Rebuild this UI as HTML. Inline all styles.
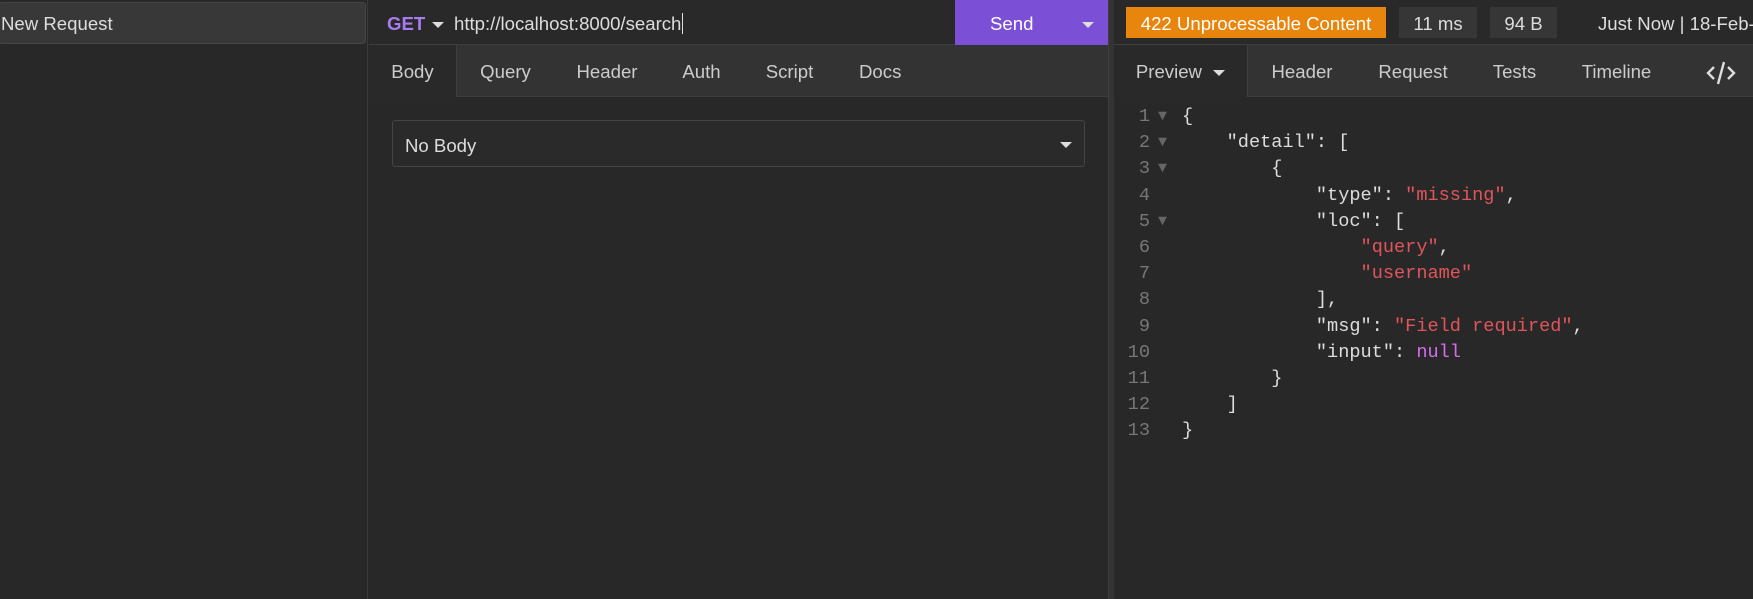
<!DOCTYPE html>
<html><head><meta charset="utf-8"><style>
*{margin:0;padding:0;box-sizing:border-box}
body{width:1753px;height:599px;background:#282828;overflow:hidden;position:relative;font-family:"Liberation Sans",sans-serif;color:#ddd;font-size:18.6px}
.a{position:absolute}
.tri{display:inline-block;width:0;height:0;border-left:6px solid transparent;border-right:6px solid transparent;border-top:6px solid #ddd;vertical-align:middle}
.tab{position:absolute;top:45px;height:52px;line-height:54px;text-align:center;color:#ccc;background:#333;border-bottom:1px solid #3e3e3e}
.code{position:absolute;font-family:"Liberation Mono",monospace;font-size:18.6px;white-space:pre;line-height:26.2px}
.s{color:#e0555b}.n{color:#d56ef0}
</style></head><body>
<div class="a" style="left:0;top:0;width:368px;height:599px;background:#282828;border-right:1px solid #3a3a3a"></div>
<div class="a" style="left:-2px;top:2px;width:368px;height:42px;background:#383838;border:1px solid #444;border-radius:3px"></div>
<div class="a" style="left:1px;top:13px;color:#ddd">New Request</div>
<div class="a" style="left:369px;top:0;width:739px;height:45px;background:#292929;border-bottom:1px solid #3e3e3e"></div>
<div class="a" style="left:387px;top:13px;color:#a77cf0;font-weight:bold">GET <span class="tri" style="margin-left:2px"></span></div>
<div class="a" style="left:454px;top:13px;color:#ddd">http://localhost:8000/search<span style="border-left:1px solid #ddd;margin-left:1px"></span></div>
<div class="a" style="left:955px;top:0;width:153px;height:45px;background:#7b4fd6"></div>
<div class="a" style="left:990px;top:13px;color:#fff">Send</div>
<div class="a" style="left:1082px;top:13px"><span class="tri"></span></div>
<div class="tab" style="left:369px;width:88px;background:#292929;border-bottom:none;border-right:1px solid #3e3e3e">Body</div>
<div class="tab" style="left:457px;width:97px">Query</div>
<div class="tab" style="left:554px;width:106px">Header</div>
<div class="tab" style="left:660px;width:83px">Auth</div>
<div class="tab" style="left:743px;width:93px">Script</div>
<div class="tab" style="left:836px;width:272px;text-align:left;padding-left:23px">Docs</div>
<div class="a" style="left:392px;top:120px;width:693px;height:47px;border:1px solid #444;border-radius:3px;background:#2a2a2a"></div>
<div class="a" style="left:405px;top:135px">No Body</div>
<div class="a" style="left:1060px;top:133px"><span class="tri"></span></div>
<div class="a" style="left:1108px;top:0;width:6px;height:599px;background:#333;border-left:1px solid #3e3e3e"></div>
<div class="a" style="left:1114px;top:0;width:639px;height:45px;background:#292929;border-bottom:1px solid #3e3e3e"></div>
<div class="a" style="left:1126px;top:7px;width:260px;height:31px;background:#e8850c;color:#fff;line-height:33px;text-align:center">422 Unprocessable Content</div>
<div class="a" style="left:1399px;top:7px;width:78px;height:31px;background:#363636;line-height:33px;text-align:center">11 ms</div>
<div class="a" style="left:1490px;top:7px;width:67px;height:31px;background:#363636;line-height:33px;text-align:center">94 B</div>
<div class="a" style="left:1598px;top:13px;white-space:nowrap">Just Now | 18-Feb-</div>
<div class="tab" style="left:1114px;width:134px;background:#292929;border-bottom:none;border-right:1px solid #3e3e3e">Preview <span class="tri" style="margin-left:6px"></span></div>
<div class="tab" style="left:1248px;width:108px">Header</div>
<div class="tab" style="left:1356px;width:114px">Request</div>
<div class="tab" style="left:1470px;width:89px">Tests</div>
<div class="tab" style="left:1559px;width:115px">Timeline</div>
<div class="tab" style="left:1674px;width:79px;padding-left:14px"><svg width="30" height="26" viewBox="0 0 30 26" style="vertical-align:middle"><path d="M8 7 L2 13 L8 19 M22 7 L28 13 L22 19 M18 2 L12 24" stroke="#ddd" stroke-width="2.4" fill="none"/></svg></div>
<div class="code" style="left:1112px;top:104px;width:38px;text-align:right;color:#777">1
2
3
4
5
6
7
8
9
10
11
12
13</div>
<div class="code" style="left:1158px;top:104px;color:#666;font-size:15px;line-height:26.2px">▼
▼
▼

▼</div>
<div class="code" style="left:1182px;top:104px;color:#ddd">{
    "detail": [
        {
            "type": <span class="s">"missing"</span>,
            "loc": [
                <span class="s">"query"</span>,
                <span class="s">"username"</span>
            ],
            "msg": <span class="s">"Field required"</span>,
            "input": <span class="n">null</span>
        }
    ]
}</div>
</body></html>
